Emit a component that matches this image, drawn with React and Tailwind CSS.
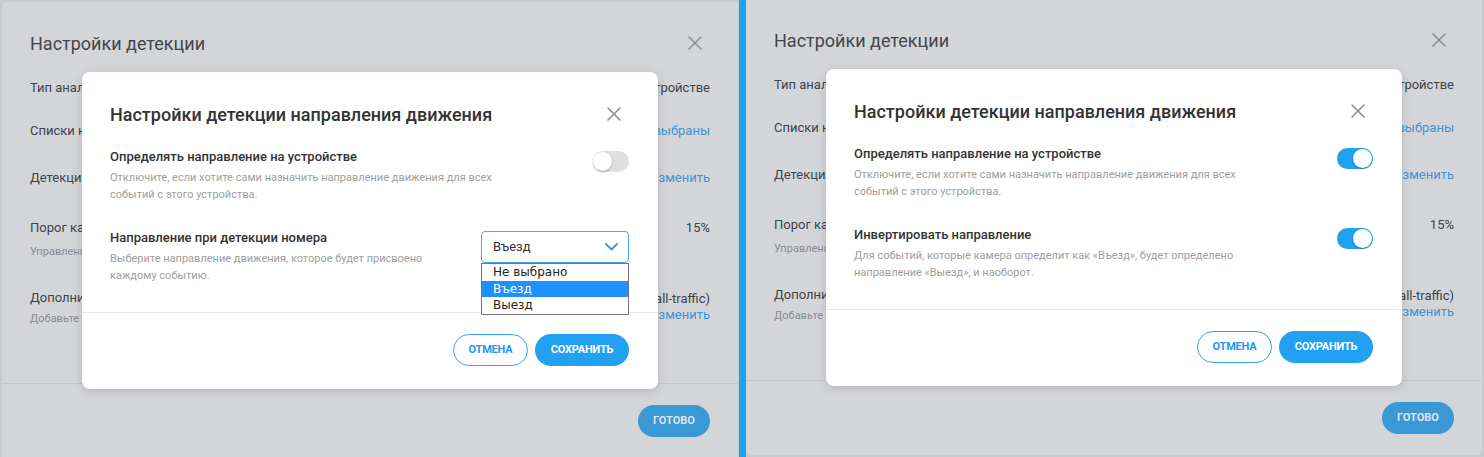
import React from "react";

const XIcon = ({ size = 14, className = "" }) => (
  <svg
    width={size}
    height={size}
    viewBox="0 0 14 14"
    fill="none"
    stroke="currentColor"
    strokeWidth="1.5"
    strokeLinecap="round"
    className={className}
  >
    <path d="M1 1L13 13M13 1L1 13" />
  </svg>
);

const Toggle = ({ on }) => (
  <div
    className={`relative h-[21px] w-[36px] rounded-full ${on ? "bg-[#22a0f2]" : "bg-[#dedfe1]"}`}
  >
    <div
      className={`absolute top-[1px] h-[19px] w-[19px] rounded-full bg-white shadow-[0_1px_2px_rgba(0,0,0,0.3)] ${
        on ? "left-[16px]" : "left-0"
      }`}
    />
  </div>
);

const DirectionSelect = () => (
  <div className="relative w-[148px]">
    <div className="flex h-[32px] items-center justify-between rounded-[4px] border border-[#4aa5e8] bg-white pl-[11px] pr-[10px] text-[13px] text-[#333]">
      <span>Въезд</span>
      <svg width="13" height="8" viewBox="0 0 13 8" fill="none" stroke="#2b9ae8" strokeWidth="1.8" strokeLinecap="round" strokeLinejoin="round">
        <path d="M1 1l5.5 5.5L12 1" />
      </svg>
    </div>
    {/* открытый список */}
    <div className="absolute left-0 top-full w-full border border-[#767676] bg-white font-['DejaVu_Sans',sans-serif] text-[12px] leading-[16.5px] text-[#222]">
      <div className="pl-[11px]">Не выбрано</div>
      <div className="bg-[#1e90ff] pl-[11px] text-white">Въезд</div>
      <div className="pl-[11px]">Выезд</div>
    </div>
  </div>
);

const Section = ({ label, desc, control, first, controlTop }) => (
  <div className={`flex items-start justify-between gap-[20px] ${first ? "mt-[22px]" : "mt-[26px]"}`}>
    <div className="max-w-[400px] flex-1">
      <div className="text-[13px] font-medium leading-[18px] text-[#333]">{label}</div>
      <div className="mt-[3px] text-[11px] leading-[17px] text-[#9e9e9e]">{desc}</div>
    </div>
    <div className={controlTop}>{control}</div>
  </div>
);

const Modal = ({ variant }) => {
  const sections =
    variant === "select"
      ? [
          {
            label: "Определять направление на устройстве",
            desc: "Отключите, если хотите сами назначить направление движения для всех событий с этого устройства.",
            control: <Toggle on={false} />,
          },
          {
            label: "Направление при детекции номера",
            desc: "Выберите направление движения, которое будет присвоено каждому событию.",
            control: <DirectionSelect />,
          },
        ]
      : [
          {
            label: "Определять направление на устройстве",
            desc: "Отключите, если хотите сами назначить направление движения для всех событий с этого устройства.",
            control: <Toggle on />,
          },
          {
            label: "Инвертировать направление",
            desc: "Для событий, которые камера определит как «Въезд», будет определено направление «Выезд», и наоборот.",
            control: <Toggle on />,
          },
        ];

  return (
    <div className="absolute left-[80px] top-[70px] h-[317px] w-[576px] rounded-[8px] bg-white shadow-[0_2px_10px_rgba(0,0,0,0.15)]">
      <div className="pb-[28px] pl-[28px] pr-[29px] pt-[30px]">
        <div className="flex h-[24px] items-center justify-between">
          <h3 className="text-[18px] font-medium text-[#333]">
            Настройки детекции направления движения
          </h3>
          <XIcon size={14} className="mr-[8px] text-[#8a8a8a]" />
        </div>
        {sections.map((s, i) => (
          <Section
            key={s.label}
            label={s.label}
            desc={s.desc}
            control={s.control}
            first={i === 0}
            controlTop={i === 0 ? "mt-[3px]" : "mt-[2px]"}
          />
        ))}
      </div>
      <div className="border-t border-[#e8e8e8]" />
      <div className="flex justify-end gap-[7px] pl-[28px] pr-[29px] pt-[21px]">
        <button className="h-[32px] w-[75px] rounded-full border border-[#3aa3ee] text-[11px] font-bold tracking-[-0.2px] text-[#2196f3]">
          ОТМЕНА
        </button>
        <button className="h-[32px] w-[94px] rounded-full bg-[#22a1f2] text-[11px] font-bold tracking-[-0.2px] text-white">
          СОХРАНИТЬ
        </button>
      </div>
    </div>
  );
};

const DetectionDialog = ({ variant, className }) => (
  <div className={`relative w-[736px] bg-[#d4d5d9] ${className}`}>
    <div className="px-[28px] pt-[27px]">
      <div className="flex h-[28px] items-center justify-between">
        <h2 className="text-[18px] text-[#43464b]">Настройки детекции</h2>
        <XIcon size={14} className="mr-[8px] text-[#8b8d91]" />
      </div>

      <div className="mt-[22px] flex h-[18px] items-center justify-between text-[13px] text-[#404348]">
        <span>Тип аналитики</span>
        <span>На устройстве</span>
      </div>
      <div className="mt-[25px] flex h-[18px] items-center justify-between text-[13px] text-[#404348]">
        <span>Списки номеров</span>
        <span className="text-[#3d93d3]">Не выбраны</span>
      </div>
      <div className="mt-[29px] flex h-[18px] items-center justify-between text-[13px] text-[#404348]">
        <span>Детекция направления</span>
        <span className="text-[#3d93d3]">Изменить</span>
      </div>
      <div className="mt-[32px]">
        <div className="flex h-[18px] items-center justify-between text-[13px] text-[#404348]">
          <span>Порог качества распознавания</span>
          <span>15%</span>
        </div>
        <div className="mt-[7px] text-[11px] leading-[16px] text-[#8a8c90]">
          Управление порогом качества
        </div>
      </div>
      <div className="mt-[29px] flex items-start justify-between">
        <div>
          <div className="text-[13px] leading-[18px] text-[#404348]">Дополнительные зоны</div>
          <div className="mt-[4px] text-[11px] leading-[16px] text-[#8a8c90]">
            Добавьте зоны детекции
          </div>
        </div>
        <div className="mt-[2px] flex flex-col items-end text-[13px] leading-[16px]">
          <span className="text-[#404348]">Весь кадр (all-traffic)</span>
          <span className="text-[#3d93d3]">Изменить</span>
        </div>
      </div>
    </div>

    <div className="mt-[56px] border-t border-[#c4c5c9]" />
    <div className="flex justify-end px-[28px] pt-[21px]">
      <button className="h-[32px] w-[72px] rounded-full bg-[#3a98d6] text-[11px] font-bold text-[#dfe4ea]">
        ГОТОВО
      </button>
    </div>

    <Modal variant={variant} />
  </div>
);

export default function App() {
  return (
    <div className="flex h-[457px] w-[1484px] overflow-hidden bg-[#c9cace] font-[Roboto,sans-serif]">
      <div className="relative h-full w-[739px] overflow-hidden pl-[2px] pt-[2px]">
        <DetectionDialog variant="select" className="h-[470px] rounded-tl-[6px]" />
      </div>
      <div className="h-full w-[7px] bg-[#1da1f2]" />
      <div className="relative h-full flex-1 overflow-hidden">
        <DetectionDialog variant="toggles" className="-mt-[1px] h-[456px] rounded-b-[6px]" />
      </div>
    </div>
  );
}
